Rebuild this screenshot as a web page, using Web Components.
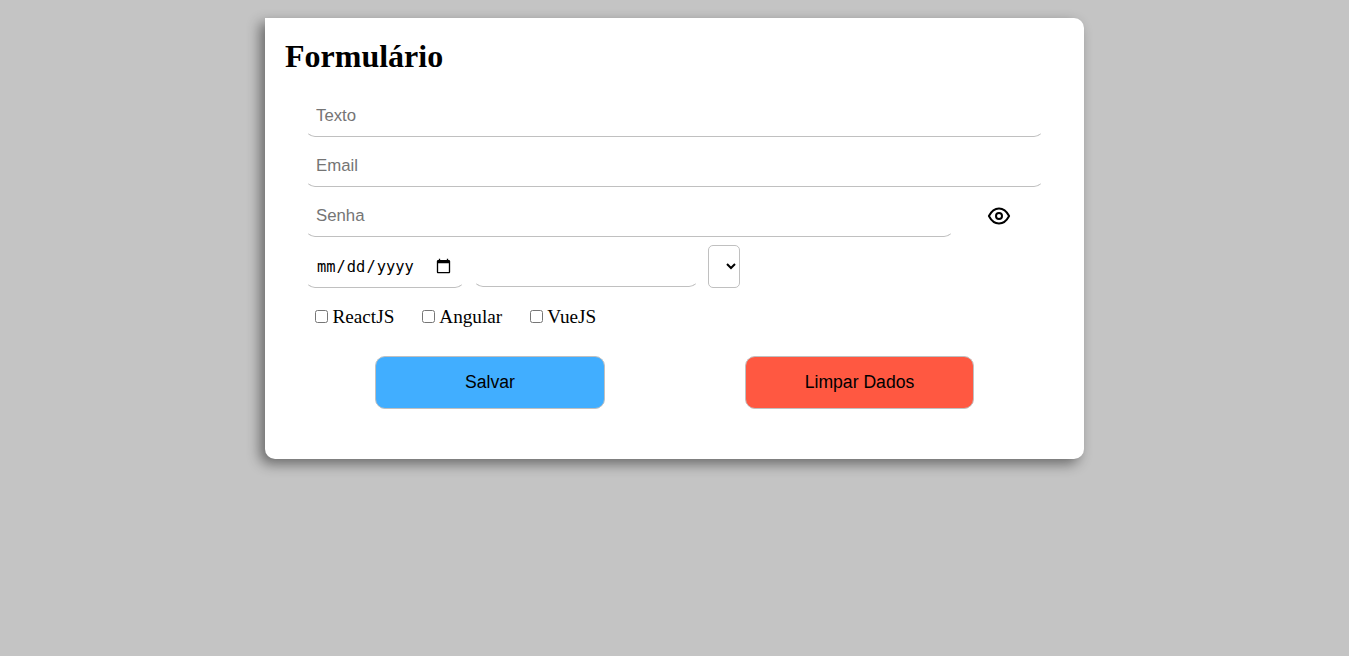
<!DOCTYPE html>
<html lang="pt-BR">
<head>
<meta charset="utf-8">
<title>Formulário</title>
<style>
body{margin:0;min-height:100vh;background:#c4c4c4;font-family:"Liberation Serif",serif;padding-top:18px;box-sizing:border-box}
</style>
</head>
<body>
<form-page></form-page>
<script>
const define = (name, html) => customElements.define(name, class extends HTMLElement {
  constructor() {
    super();
    this.attachShadow({ mode: 'open' }).innerHTML = html;
    this.setup();
  }
  setup() {
    const control = this.shadowRoot.querySelector('[data-control]');
    if (!control) return;
    for (const key of ['placeholder', 'type', 'aria-label']) {
      if (this.hasAttribute(key)) control.setAttribute(key, this.getAttribute(key));
    }
  }
});

define('text-field', `<style>
:host{display:block;height:var(--h,42px);box-sizing:border-box}
input{display:block;box-sizing:border-box;width:100%;height:100%;margin:0;padding:0 10px;border:1px solid transparent;border-bottom-color:#c0c0c0;border-radius:10px;background:#fff;outline:0;font:16.8px "Liberation Sans",sans-serif;color:#000}
input[type=date]{font:15.4px "DejaVu Sans Mono",monospace;padding:0 10px}
input::-webkit-calendar-picker-indicator{width:17px;height:17px}
input::placeholder{color:#757575}
</style><input data-control>`);

define('option-select', `<style>
:host{display:block;width:32px;height:43px}
select{display:block;width:100%;height:100%;box-sizing:border-box;margin:0;padding:8px 1px 8px 8px;border:1px solid #c0c0c0;border-radius:5px;background:#fff;font:16.8px "Liberation Sans",sans-serif}
</style><select aria-label="Opções"></select>`);

define('eye-toggle', `<style>
:host{display:block;width:24px;height:24px}svg{display:block}
</style><svg width="24" height="24" viewBox="0 0 24 24" fill="none" stroke="#000" stroke-width="2" stroke-linejoin="round"><path d="M1.9 12C4.5 7 8 4.5 12 4.5S19.500 7 22.100 12C19.500 17 16 19.500 12 19.500S4.500 17 1.900 12Z"/><circle cx="12" cy="12" r="3"/></svg>`);

define('check-option', `<style>
:host{display:block}
label{display:flex;align-items:center;font-size:19.2px;line-height:21px}
input{margin:0 4.500px 0 0;width:13px;height:13px}
</style><label><input type="checkbox"><slot></slot></label>`);

define('action-button', `<style>
:host{display:block;height:53px}
button{display:block;width:100%;height:100%;box-sizing:border-box;margin:0;padding:0;border:1px solid #c0c0c0;border-radius:10px;background:var(--fill);color:#000;font:17.6px "Liberation Sans",sans-serif}
</style><button type="button"><slot></slot></button>`);

define('form-card', `<style>
:host{display:block;box-sizing:border-box;width:819px;height:441px;margin:0 auto;padding:20px 40px 0;border-radius:0 10px 10px 10px;background:#fff;box-shadow:-5px 5px 13px rgba(0,0,0,.46)}
h1{margin:0 0 20px -20px;font-size:32px;line-height:37px;font-weight:bold}
</style><h1><slot name="title"></slot></h1><slot></slot>`);

define('form-page', `<style>
:host{display:block}
.fields{display:grid;gap:8px}
.password{display:flex;align-items:center}
.password text-field{width:649px}
.password eye-toggle{margin:0 0 0 33px}
.row{display:flex;align-items:flex-start}
.date{width:160px;--h:43px}
.extra{width:226px;margin:0 9px 0 8px}
.checks{display:flex;margin:18px 0 0 10px}
.checks check-option+check-option{margin-left:27.500px}
.actions{display:flex;margin:29px 0 0 70px;gap:140px}
.save{width:230px;--fill:#41aeff}
.clear{width:229px;--fill:#ff5841}
</style>
<form-card><span slot="title">Formulário</span>
<div class="fields">
<text-field type="text" placeholder="Texto"></text-field>
<text-field type="email" placeholder="Email"></text-field>
<div class="password"><text-field type="password" placeholder="Senha"></text-field><eye-toggle></eye-toggle></div>
<div class="row"><text-field class="date" type="date" aria-label="Data"></text-field><text-field class="extra" type="text" aria-label="Valor"></text-field><option-select></option-select></div>
</div>
<div class="checks"><check-option>ReactJS</check-option><check-option>Angular</check-option><check-option>VueJS</check-option></div>
<div class="actions"><action-button class="save">Salvar</action-button><action-button class="clear">Limpar Dados</action-button></div>
</form-card>`);
</script>
</body>
</html>
